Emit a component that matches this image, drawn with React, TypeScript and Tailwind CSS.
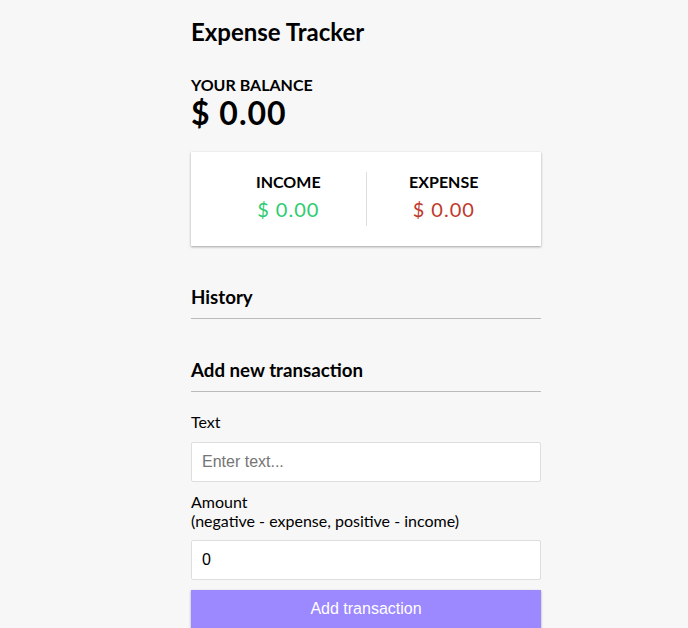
import * as React from "react"

const cardShadow = "shadow-[0_1px_3px_rgba(0,0,0,0.12),0_1px_2px_rgba(0,0,0,0.24)]"

function Summary() {
  return (
    <div className={`my-[20px] flex justify-between bg-white p-[20px] ${cardShadow}`}>
      <div className="flex-1 border-r border-[#dedede] text-center">
        <h4 className="text-[16px] font-bold uppercase">Income</h4>
        <p className="my-[5px] text-[20px] leading-[24px] tracking-[1px] text-[#2ecc71]">$ 0.00</p>
      </div>
      <div className="flex-1 text-center">
        <h4 className="text-[16px] font-bold uppercase">Expense</h4>
        <p className="my-[5px] text-[20px] leading-[24px] tracking-[1px] text-[#c0392b]">$ 0.00</p>
      </div>
    </div>
  )
}

export default function App() {
  const [text, setText] = React.useState("")
  const [amount, setAmount] = React.useState("0")

  return (
    <div className="min-h-screen bg-[#f7f7f7] font-[Lato,sans-serif] text-[16px] leading-[1.2] text-black">
      <div className="flex justify-center pl-[44px]">
        <div className="w-[350px] pt-[18px] pb-[30px]">
          <h2 className="mb-[28px] text-[24px] font-bold">Expense Tracker</h2>

          <h4 className="text-[16px] font-bold uppercase">Your Balance</h4>
          <h1 className="text-[32px] font-bold tracking-[1px]">$ 0.00</h1>

          <Summary />

          <h3 className="mt-[40px] border-b border-[#bbb] pb-[10px] text-[18.72px] font-bold">History</h3>
          <ul className="mt-[10px] mb-[40px] list-none p-0" />

          <h3 className="mb-[10px] border-b border-[#bbb] pb-[10px] text-[18.72px] font-bold">
            Add new transaction
          </h3>
          <form onSubmit={(e) => e.preventDefault()}>
            <div>
              <label htmlFor="text" className="my-[10px] inline-block text-[16px]">
                Text
              </label>
              <input
                id="text"
                type="text"
                value={text}
                onChange={(e) => setText(e.target.value)}
                placeholder="Enter text..."
                className="block w-full rounded-[2px] border border-[#dedede] bg-white p-[10px] font-['Liberation_Sans',Arial,sans-serif] text-[16px] leading-[18px] placeholder:text-[#757575] focus:outline-none"
              />
            </div>
            <div>
              <label htmlFor="amount" className="my-[10px] inline-block text-[16px]">
                Amount <br />
                (negative - expense, positive - income)
              </label>
              <input
                id="amount"
                type="number"
                value={amount}
                onChange={(e) => setAmount(e.target.value)}
                placeholder="Enter amount..."
                className="block w-full rounded-[2px] border border-[#dedede] bg-white p-[10px] font-['Liberation_Sans',Arial,sans-serif] text-[16px] leading-[18px] focus:outline-none"
              />
            </div>
            <button
              className={`mt-[10px] mb-[30px] block w-full cursor-pointer border-0 bg-[#9c88ff] p-[10px] font-['Liberation_Sans',Arial,sans-serif] text-[16px] leading-[18px] text-white ${cardShadow}`}
            >
              Add transaction
            </button>
          </form>
        </div>
      </div>
    </div>
  )
}
